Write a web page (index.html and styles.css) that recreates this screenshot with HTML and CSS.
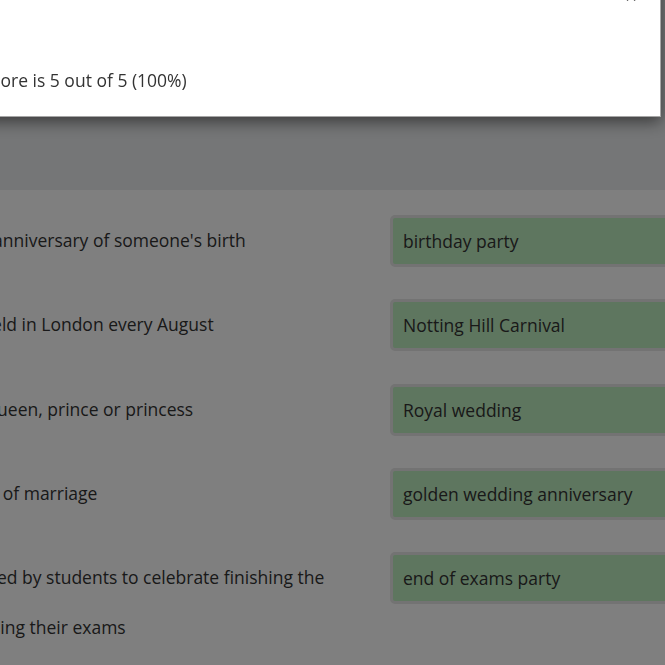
FILE: index.html
```html
<!DOCTYPE html>
<html lang="en">
<head>
<meta charset="utf-8">
<title>Celebrations – matching exercise</title>
<link rel="stylesheet" href="styles.css">
</head>
<body>
<div class="page">
  <header class="toolbar"></header>
  <main class="exercise">
    <div class="row">
      <div class="label">a celebration of the anniversary of someone's birth</div>
      <div class="answer">birthday party</div>
    </div>
    <div class="row">
      <div class="label">the street carnival held in London every August</div>
      <div class="answer">Notting Hill Carnival</div>
    </div>
    <div class="row">
      <div class="label">marriage of a king, queen, prince or princess</div>
      <div class="answer">Royal wedding</div>
    </div>
    <div class="row">
      <div class="label">the 50th anniversary of marriage</div>
      <div class="answer">golden wedding anniversary</div>
    </div>
    <div class="row">
      <div class="label">a large party organised by students to celebrate finishing the school year and passing their exams</div>
      <div class="answer">end of exams party</div>
    </div>
  </main>
</div>
<div class="backdrop"></div>
<div class="modal" role="dialog">
  <div class="modal-header">
    <button class="close" type="button" aria-label="Close">×</button>
  </div>
  <div class="modal-body">Your score is 5 out of 5 (100%)</div>
</div>
</body>
</html>
```
FILE: styles.css
```css
html, body {
  margin: 0;
  padding: 0;
}
body {
  width: 665px;
  height: 665px;
  overflow: hidden;
  background: #ffffff;
  font-family: "Open Sans", "DejaVu Sans", sans-serif;
  color: #333333;
}
.page {
  margin-left: -170px;
  width: 1000px;
}
.toolbar {
  height: 190px;
  background: #ebedef;
}
.exercise {
  padding-top: 8px;
  background: #ffffff;
}
.row {
  display: grid;
  grid-template-columns: 530px 400px;
  column-gap: 30px;
  align-items: start;
  padding: 17px 0 15.25px;
}
.label {
  font-size: 17.5px;
  line-height: 50px;
}
.answer {
  box-sizing: border-box;
  height: 52px;
  padding: 0 10px;
  border: 3px solid #e6e6e6;
  border-radius: 5px;
  background: #bdecbe;
  font-size: 17.5px;
  line-height: 46px;
}
.backdrop {
  position: fixed;
  inset: 0;
  background: rgba(0, 0, 0, 0.5);
}
.modal {
  position: fixed;
  top: -30px;
  right: 4px;
  width: 736px;
  box-sizing: border-box;
  background: #ffffff;
  border: 1px solid rgba(0, 0, 0, 0.35);
  border-top: 0;
  box-shadow: 0 5px 15px rgba(0, 0, 0, 0.5);
}
.modal-header {
  height: 40px;
  box-sizing: border-box;
  padding: 13px 22px 0;
  display: flex;
  justify-content: flex-end;
}
.close {
  padding: 0;
  border: 0;
  background: none;
  font-family: "Open Sans", sans-serif;
  font-size: 24px;
  font-weight: 700;
  line-height: 1;
  color: #444444;
  height: 24px;
}
.modal-body {
  padding: 58px 15px 24px;
  font-size: 17.5px;
  line-height: 24px;
}
```
